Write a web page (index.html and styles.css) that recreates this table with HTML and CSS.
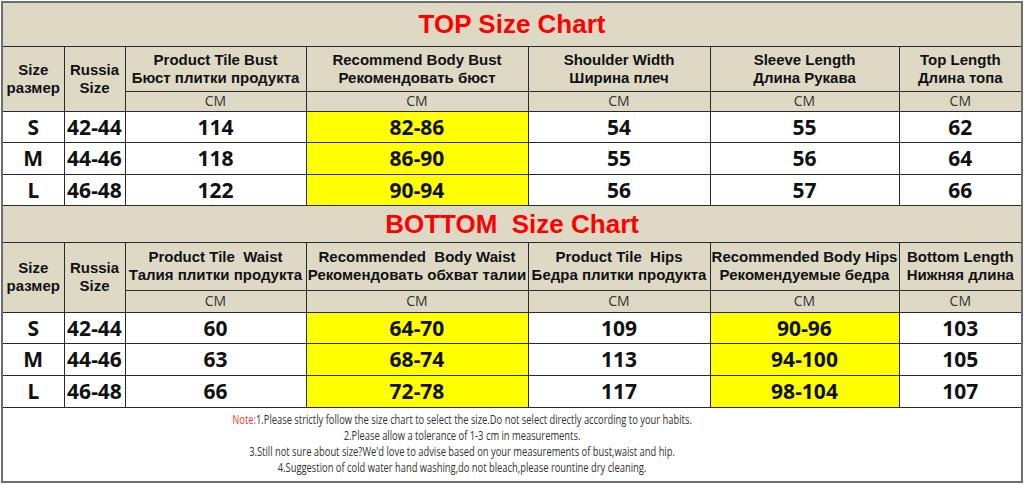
FILE: index.html
```html
<!DOCTYPE html>
<html>
<head>
<meta charset="utf-8">
<link rel="stylesheet" href="styles.css">
</head>
<body>
<table class="chart">
  <colgroup>
    <col class="c1"><col class="c2"><col class="c3"><col class="c4"><col class="c5"><col class="c6"><col class="c7">
  </colgroup>
  <tr class="r-title1"><td colspan="7" class="title">TOP Size Chart</td></tr>
  <tr class="r-head1">
    <th rowspan="2">Size<br>размер</th>
    <th rowspan="2">Russia<br>Size</th>
    <th>Product Tile Bust<br>Бюст плитки продукта</th>
    <th>Recommend Body Bust<br>Рекомендовать бюст</th>
    <th>Shoulder Width<br>Ширина плеч</th>
    <th>Sleeve Length<br>Длина Рукава</th>
    <th>Top Length<br>Длина топа</th>
  </tr>
  <tr class="r-cm1"><td class="cm">CM</td><td class="cm">CM</td><td class="cm">CM</td><td class="cm">CM</td><td class="cm">CM</td></tr>
  <tr class="r-d1"><td class="d">S</td><td class="d">42-44</td><td class="d">114</td><td class="d y">82-86</td><td class="d">54</td><td class="d">55</td><td class="d">62</td></tr>
  <tr class="r-d2"><td class="d">M</td><td class="d">44-46</td><td class="d">118</td><td class="d y">86-90</td><td class="d">55</td><td class="d">56</td><td class="d">64</td></tr>
  <tr class="r-d1"><td class="d">L</td><td class="d">46-48</td><td class="d">122</td><td class="d y">90-94</td><td class="d">56</td><td class="d">57</td><td class="d">66</td></tr>
  <tr class="r-title2"><td colspan="7" class="title">BOTTOM&nbsp; Size Chart</td></tr>
  <tr class="r-head2">
    <th rowspan="2">Size<br>размер</th>
    <th rowspan="2">Russia<br>Size</th>
    <th>Product Tile&nbsp; Waist<br>Талия плитки продукта</th>
    <th>Recommended&nbsp; Body Waist<br>Рекомендовать обхват талии</th>
    <th>Product Tile&nbsp; Hips<br>Бедра плитки продукта</th>
    <th>Recommended Body Hips<br>Рекомендуемые бедра</th>
    <th>Bottom Length<br>Нижняя длина</th>
  </tr>
  <tr class="r-cm2"><td class="cm">CM</td><td class="cm">CM</td><td class="cm">CM</td><td class="cm">CM</td><td class="cm">CM</td></tr>
  <tr class="r-d1"><td class="d">S</td><td class="d">42-44</td><td class="d">60</td><td class="d y">64-70</td><td class="d">109</td><td class="d y">90-96</td><td class="d">103</td></tr>
  <tr class="r-d2"><td class="d">M</td><td class="d">44-46</td><td class="d">63</td><td class="d y">68-74</td><td class="d">113</td><td class="d y">94-100</td><td class="d">105</td></tr>
  <tr class="r-d2"><td class="d">L</td><td class="d">46-48</td><td class="d">66</td><td class="d y">72-78</td><td class="d">117</td><td class="d y">98-104</td><td class="d">107</td></tr>
  <tr class="r-notes">
    <td colspan="7" class="notes">
      <div class="notes-inner">
        <div><span class="note-label">Note:</span>1.Please strictly follow the size chart to select the size.Do not select directly according to your habits.</div>
        <div>2.Please allow a tolerance of 1-3 cm in measurements.</div>
        <div>3.Still not sure about size?We'd love to advise based on your measurements of bust,waist and hip.</div>
        <div>4.Suggestion of cold water hand washing,do not bleach,please rountine dry cleaning.</div>
      </div>
    </td>
  </tr>
</table>
</body>
</html>
```

FILE: styles.css
```css
html, body {
  margin: 0;
  padding: 0;
  background: #ffffff;
}

body {
  padding: 1px 0 0 1px;
}

.chart {
  width: 1020px;
  border-collapse: collapse;
  table-layout: fixed;
  border: 2px solid #6e6e6e;
  font-family: "Liberation Sans", Arial, sans-serif;
}

.c1 { width: 62px; }
.c2 { width: 61px; }
.c3 { width: 181px; }
.c4 { width: 222px; }
.c5 { width: 182px; }
.c6 { width: 189px; }
.c7 { width: 123px; }

.chart td, .chart th {
  border: 1px solid #2a2a2a;
  padding: 0;
  text-align: center;
  vertical-align: middle;
}

.r-title1 { height: 44px; }
.r-head1 { height: 45px; }
.r-cm1 { height: 20px; }
.r-d1 { height: 31px; }
.r-d2 { height: 32px; }
.r-title2 { height: 37px; }
.r-head2 { height: 48px; }
.r-cm2 { height: 22px; }
.r-notes { height: 75px; }

.title {
  background: #ddd9c4;
  color: #ff0000;
  font-weight: 700;
  font-size: 26px;
  line-height: 30px;
}

.chart th {
  background: #ddd9c4;
  color: #111111;
  font-weight: 700;
  font-size: 15px;
  line-height: 18px;
  white-space: nowrap;
}

.cm {
  background: #ddd9c4;
  font-family: "Open Sans", sans-serif;
  font-size: 14px;
  line-height: 16px;
  color: #333333;
}

.d {
  background: #ffffff;
  font-family: "Noto Sans", "Open Sans", sans-serif;
  font-weight: 700;
  font-size: 21px;
  line-height: 24px;
  color: #111111;
}

.d.y {
  background: #ffff00;
}

.chart .notes {
  background: #ffffff;
  font-family: "Open Sans", sans-serif;
  font-size: 12px;
  line-height: 16px;
  color: #333333;
  padding-right: 100px;
}

.notes-inner {
  white-space: nowrap;
  transform: scaleX(0.78);
  transform-origin: center;
}

.note-label {
  color: #ee3a2e;
}
```
